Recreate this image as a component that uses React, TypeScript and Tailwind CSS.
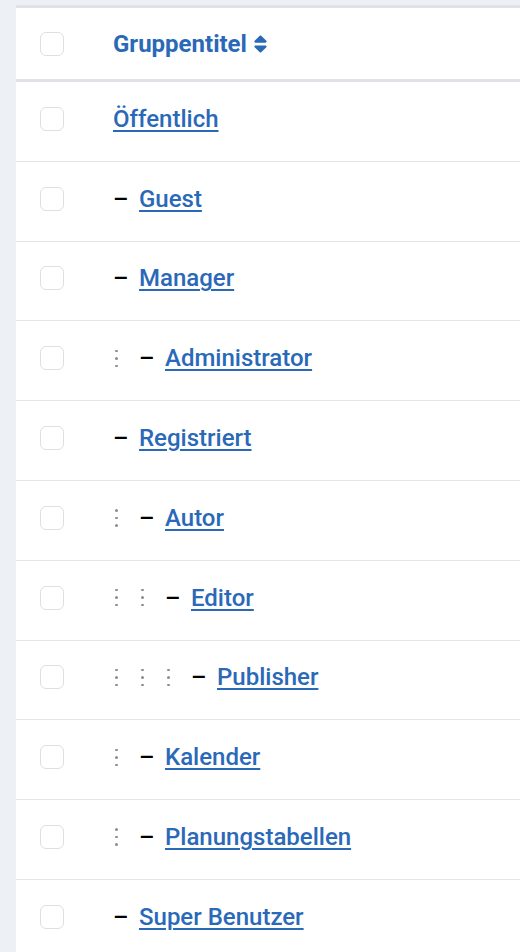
import { FaSort } from "react-icons/fa";

interface Group {
  title: string;
  level: number;
}

const groups: Group[] = [
  { title: "Öffentlich", level: 0 },
  { title: "Guest", level: 1 },
  { title: "Manager", level: 1 },
  { title: "Administrator", level: 2 },
  { title: "Registriert", level: 1 },
  { title: "Autor", level: 2 },
  { title: "Editor", level: 3 },
  { title: "Publisher", level: 4 },
  { title: "Kalender", level: 2 },
  { title: "Planungstabellen", level: 2 },
  { title: "Super Benutzer", level: 1 },
];

function Checkbox() {
  return <span className="block h-6 w-6 rounded-[6px] border border-[#dcdfe4] bg-white" />;
}

// senkrechte Punkte als Einrückung je Ebene
function Dots() {
  return (
    <span className="flex w-[26px] shrink-0 flex-col gap-[5px] pl-[2px]">
      <span className="h-[2.5px] w-[2.5px] rounded-full bg-[#8a8d91]" />
      <span className="h-[2.5px] w-[2.5px] rounded-full bg-[#8a8d91]" />
      <span className="h-[2.5px] w-[2.5px] rounded-full bg-[#8a8d91]" />
    </span>
  );
}

export default function App() {
  return (
    <div
      className="min-h-[952px] bg-[#edf1f6] pl-4 pt-[5px]"
      style={{ fontFamily: "Roboto, 'Liberation Sans', sans-serif" }}
    >
      <div className="border-t-[3px] border-[#dfe3e8] bg-white">
        <div className="flex h-[74px] items-center border-b-[3px] border-[#dfe3e8]">
          <div className="w-[97px] shrink-0 pl-6">
            <Checkbox />
          </div>
          <div className="flex items-center text-[24px] font-bold text-[#2a69b8]">
            Gruppentitel
            <FaSort className="ml-[6px] h-[22px] w-[15px]" />
          </div>
        </div>
        {groups.map((g) => (
          <div
            key={g.title}
            className="flex h-[79.8px] items-center border-b border-[#e2e4e7] pb-[5px]"
          >
            <div className="w-[97px] shrink-0 pl-6">
              <Checkbox />
            </div>
            <div className="flex items-center text-[24px] font-medium">
              {Array.from({ length: Math.max(0, g.level - 1) }).map((_, i) => (
                <Dots key={i} />
              ))}
              {g.level > 0 && (
                <span className="inline-block w-[26px] shrink-0 text-black">–</span>
              )}
              <a
                href="#"
                className="text-[#2a69b8] underline decoration-2 underline-offset-[3px]"
              >
                {g.title}
              </a>
            </div>
          </div>
        ))}
      </div>
    </div>
  );
}
